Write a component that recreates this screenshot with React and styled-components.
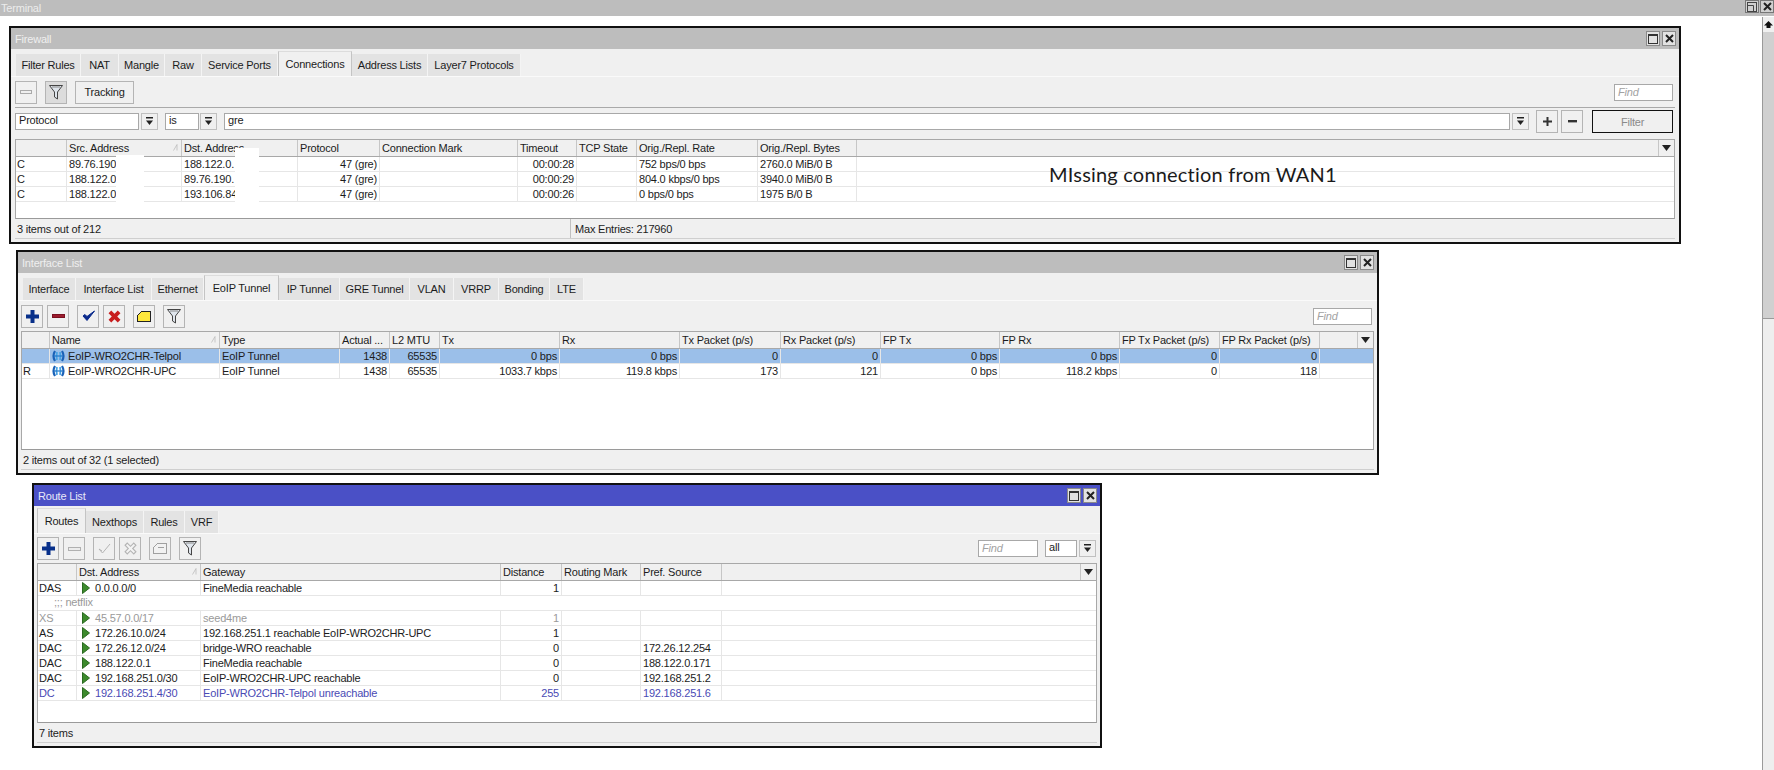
import React from "react";
import styled, { createGlobalStyle } from "styled-components";

const GlobalStyle = createGlobalStyle`
	html, body {
		margin: 0;
		padding: 0;
		background: #fff;
		overflow: hidden;
	}
	body {
		font-family: "Liberation Sans", Arial, sans-serif;
		font-size: 11px;
		letter-spacing: -0.2px;
		color: #1c1c1c;
	}
`;

const Desktop = styled.div`
	position: relative;
	width: 1774px;
	height: 770px;
	overflow: hidden;
	background: #fff;
`;

const TopBar = styled.div`
	display: flex;
	align-items: center;
	justify-content: space-between;
	height: 16px;
	padding-left: 1px;
	background: #bdbdbd;
	color: #ececec;
`;

const TopButtons = styled.div`
	display: flex;
	gap: 1px;
	align-self: flex-start;
`;

const TopButton = styled.div`
	display: flex;
	align-items: center;
	justify-content: center;
	width: 14px;
	height: 13px;
	box-sizing: border-box;
	border: 1px solid #777;
	background: #d0d0d0;
`;

const ScrollBar = styled.div`
	position: absolute;
	top: 17px;
	right: 0;
	bottom: 0;
	width: 12px;
	display: flex;
	flex-direction: column;
	box-sizing: border-box;
	border-left: 1px solid #9a9a9a;
	background: #eee;
`;

const ScrollArrow = styled.div`
	display: flex;
	align-items: center;
	justify-content: center;
	height: 15px;
	background: #f0f0f0;
`;

const ScrollThumb = styled.div`
	height: 287px;
	box-sizing: border-box;
	background: #d0d0d0;
	border-bottom: 1px solid #9a9a9a;
`;

const Window = styled.section`
	position: absolute;
	left: ${(p) => p.$x}px;
	top: ${(p) => p.$y}px;
	width: ${(p) => p.$w}px;
	height: ${(p) => p.$h}px;
	box-sizing: border-box;
	display: flex;
	flex-direction: column;
	border: 2px solid #111;
	background: #f0f0f0;
`;

const TitleBar = styled.header`
	flex: none;
	display: flex;
	align-items: center;
	justify-content: space-between;
	height: ${(p) => p.$h}px;
	padding: 0 3px 0 4px;
	background: ${(p) => (p.$active ? "#4a50c6" : "#bdbdbd")};
	color: ${(p) => (p.$active ? "#e8e8f8" : "#efefef")};
`;

const TitleButtons = styled.div`
	display: flex;
	gap: 2px;
`;

const TitleButton = styled.div`
	display: flex;
	align-items: center;
	justify-content: center;
	width: 14px;
	height: 15px;
	box-sizing: border-box;
	border: 1px solid #8a8a8a;
	background: #e2e2e2;
`;

const TabBar = styled.nav`
	flex: none;
	display: flex;
	align-items: flex-end;
	height: ${(p) => p.$h}px;
	padding-left: ${(p) => p.$left}px;
`;

const Tab = styled.div`
	width: ${(p) => p.$w}px;
	height: ${(p) => (p.$active ? 25 : 22)}px;
	box-sizing: border-box;
	display: flex;
	align-items: center;
	justify-content: center;
	background: ${(p) => (p.$active ? "#f0f0f0" : "#e3e3e3")};
	border-right: 1px solid ${(p) => (p.$active ? "#c4c4c4" : "#f4f4f4")};
	border-left: ${(p) => (p.$active ? "1px solid #c4c4c4" : "0")};
	border-top: ${(p) => (p.$active ? "1px solid #dcdcdc" : "0")};
`;

const Panel = styled.div`
	flex: 1;
	min-height: 0;
	display: flex;
	flex-direction: column;
	padding: 0 ${(p) => p.$side}px 0 ${(p) => p.$side}px;
	border-top: 1px solid #fafafa;
`;

const Toolbar = styled.div`
	flex: none;
	display: flex;
	align-items: center;
	gap: 8px;
	height: ${(p) => p.$h}px;
	padding-right: ${(p) => p.$right || 0}px;
	box-sizing: border-box;
`;

const ToolGroup = styled.div`
	display: flex;
	gap: 4px;
`;

const ToolButton = styled.button`
	display: flex;
	align-items: center;
	justify-content: center;
	width: 22px;
	height: 23px;
	padding: 0;
	box-sizing: border-box;
	border: 1px solid #b4b4b4;
	background: ${(p) => (p.$pressed ? "#dcdcdc" : "#f0f0f0")};
`;

const TextButton = styled.button`
	width: ${(p) => p.$w}px;
	height: 23px;
	padding: 0;
	box-sizing: border-box;
	font: inherit;
	letter-spacing: inherit;
	color: inherit;
	border: 1px solid #b4b4b4;
	background: #f0f0f0;
`;

const FindBox = styled.div`
	width: ${(p) => p.$w}px;
	height: 17px;
	box-sizing: border-box;
	padding: 1px 3px;
	font-style: italic;
	color: #a2a2a2;
	background: #fff;
	border: 1px solid #a8a8a8;
`;

const ToolSpacer = styled.div`
	flex: 1;
`;

const CompactRow = styled.div`
	display: flex;
	align-items: center;
	gap: 2px;
`;

const FilterRow = styled.div`
	flex: none;
	display: flex;
	align-items: center;
	height: 32px;
	box-sizing: border-box;
	padding: 0 2px 4px 0;
	border-top: 1px solid #a9a9a9;
`;

const FilterField = styled.div`
	flex: ${(p) => (p.$w ? "none" : 1)};
	width: ${(p) => p.$w || 0}px;
	height: 17px;
	box-sizing: border-box;
	padding: 0 3px;
	margin-left: ${(p) => p.$gap || 0}px;
	background: #fff;
	border: 1px solid #a8a8a8;
`;

const ArrowButton = styled.div`
	flex: none;
	display: flex;
	align-items: center;
	justify-content: center;
	width: 17px;
	height: 17px;
	margin-left: ${(p) => p.$gap || 0}px;
	box-sizing: border-box;
	border: 1px solid #c0c0c0;
	background: #f0f0f0;
`;

const SquareButton = styled.div`
	flex: none;
	display: flex;
	align-items: center;
	justify-content: center;
	width: 22px;
	height: 23px;
	margin-left: ${(p) => p.$gap}px;
	box-sizing: border-box;
	border: 1px solid #b4b4b4;
`;

const DefaultButton = styled.div`
	flex: none;
	display: flex;
	align-items: center;
	justify-content: center;
	width: 81px;
	height: 23px;
	margin-left: 9px;
	box-sizing: border-box;
	border: 1px solid #111;
	color: #8a8a8a;
`;

const Table = styled.div`
	position: relative;
	flex: 1;
	min-height: 0;
	display: flex;
	flex-direction: column;
	box-sizing: border-box;
	background: #fff;
	border: 1px solid #a8a8a8;
	border-bottom: 1px solid #9a9a9a;
`;

const HeaderRow = styled.div`
	flex: none;
	display: flex;
	height: 17px;
	box-sizing: border-box;
	background: #f0f0f0;
	border-bottom: 1px solid #a8a8a8;
`;

const HeaderCell = styled.div`
	flex: none;
	display: flex;
	align-items: center;
	justify-content: space-between;
	width: ${(p) => p.$w}px;
	box-sizing: border-box;
	padding: 0 3px 1px 2px;
	white-space: nowrap;
	overflow: hidden;
	border-right: 1px solid #c6c6c6;
`;

const HeaderFiller = styled.div`
	flex: 1;
	display: flex;
	justify-content: flex-end;
	align-items: center;
`;

const MenuArrow = styled.div`
	display: flex;
	align-items: center;
	justify-content: center;
	width: 15px;
	height: 100%;
	border-left: 1px solid #c6c6c6;
`;

const Row = styled.div`
	flex: none;
	display: flex;
	height: 15px;
	box-sizing: border-box;
	color: ${(p) => p.$color || "inherit"};
	background: ${(p) => (p.$selected ? "#9bbfe9" : "#fff")};
	border-bottom: 1px solid #e6e6e6;
`;

const Cell = styled.div`
	flex: none;
	display: flex;
	align-items: center;
	justify-content: ${(p) => (p.$right ? "flex-end" : "flex-start")};
	gap: 5px;
	width: ${(p) => p.$w}px;
	box-sizing: border-box;
	padding: 0 2px 1px 2px;
	white-space: nowrap;
	overflow: hidden;
	border-right: 1px solid #e6e6e6;
	&:first-child {
		padding-left: 1px;
	}
`;

const CommentRow = styled.div`
	flex: none;
	height: 15px;
	box-sizing: border-box;
	padding-left: 16px;
	line-height: 13px;
	color: #9a9a9a;
	border-bottom: 1px solid #e6e6e6;
`;

const StatusBar = styled.footer`
	flex: none;
	display: flex;
	align-items: center;
	height: 20px;
	box-sizing: border-box;
	padding-left: 2px;
	border-bottom: 1px solid #cfcfcf;
`;

const StatusPart = styled.div`
	width: ${(p) => p.$w || 0}px;
	flex: ${(p) => (p.$w ? "none" : 1)};
	box-sizing: border-box;
	height: 100%;
	display: flex;
	align-items: center;
	padding-left: ${(p) => p.$pad || 0}px;
	border-left: ${(p) => (p.$divider ? "1px solid #c0c0c0" : "0")};
`;

const BottomGap = styled.div`
	flex: none;
	height: ${(p) => p.$h}px;
`;

const Whiteout = styled.div`
	position: absolute;
	left: ${(p) => p.$x}px;
	top: ${(p) => p.$y}px;
	width: ${(p) => p.$w}px;
	height: ${(p) => p.$h}px;
	background: #fff;
`;

const Annotation = styled.div`
	position: absolute;
	left: 1049px;
	top: 163px;
	font-family: Lato, "Open Sans", sans-serif;
	font-size: 20px;
	line-height: 22px;
	letter-spacing: 0.2px;
	color: #1a1a1a;
	white-space: nowrap;
`;

const RowIcon = styled.svg`
	flex: none;
	margin: 0 ${(p) => p.$right || 0}px 0 ${(p) => p.$left || 0}px;
`;

// icons

const DownMark = () => (
	<svg width="9" height="9" viewBox="0 0 9 9">
		<rect x="1" y="0" width="7" height="1.5" fill="#222" />
		<path d="M1 3.5h7L4.5 8z" fill="#222" />
	</svg>
);

const MenuMark = () => (
	<svg width="9" height="6" viewBox="0 0 9 6">
		<path d="M0 0h9L4.5 6z" fill="#222" />
	</svg>
);

const SortMark = () => (
	<svg width="5" height="7" viewBox="0 0 5 7">
		<path d="M0.5 6.5L4 0.5v6" fill="none" stroke="#bbb" strokeWidth="0.8" />
	</svg>
);

const MaxMark = () => (
	<svg width="10" height="10" viewBox="0 0 10 10">
		<rect x="0.5" y="0.5" width="9" height="9" fill="none" stroke="#333" />
		<rect x="0" y="0" width="10" height="2" fill="#333" />
	</svg>
);

const CloseMark = () => (
	<svg width="9" height="9" viewBox="0 0 9 9">
		<path d="M1 1l7 7M8 1L1 8" stroke="#222" strokeWidth="2" />
	</svg>
);

const RestoreMark = () => (
	<svg width="10" height="10" viewBox="0 0 10 10">
		<rect x="0.5" y="0.5" width="9" height="9" fill="none" stroke="#444" />
		<path d="M0.5 3.5h6v6" fill="none" stroke="#444" />
	</svg>
);

const UpMark = () => (
	<svg width="9" height="7" viewBox="0 0 9 7">
		<path d="M4.5 0L9 4.5H6.5V7h-4V4.5H0z" fill="#111" />
	</svg>
);

const PlusIcon = () => (
	<svg width="13" height="13" viewBox="0 0 13 13">
		<path d="M4.5 0h4v4.5H13v4H8.5V13h-4V8.5H0v-4h4.5z" fill="#08308a" />
	</svg>
);

const SmallPlus = () => (
	<svg width="9" height="9" viewBox="0 0 9 9">
		<path d="M3.5 0h2v3.5H9v2H5.5V9h-2V5.5H0v-2h3.5z" fill="#333" />
	</svg>
);

const SmallMinus = () => (
	<svg width="9" height="3" viewBox="0 0 9 3">
		<rect width="9" height="2.4" fill="#333" />
	</svg>
);

const MinusIcon = ({ off }) => (
	<svg width="13" height="4" viewBox="0 0 13 4">
		<rect
			x="0.5"
			y="0.5"
			width="12"
			height="3"
			fill={off ? "#ececec" : "#9c1c2e"}
			stroke={off ? "#b0b0b0" : "#7a1020"}
		/>
	</svg>
);

const CheckIcon = ({ off }) => (
	<svg width="13" height="12" viewBox="0 0 13 12">
		{off ? (
			<path d="M1 6l3.5 4L12 1M1 6l3 2" fill="none" stroke="#b4b4b4" strokeWidth="1" />
		) : (
			<path d="M1 6l4 4.5L12.5 1 5 6.5 3 4.5z" fill="#0a2a8c" stroke="#0a2a8c" />
		)}
	</svg>
);

const CrossIcon = ({ off }) => (
	<svg width="13" height="13" viewBox="0 0 12 12">
		{off ? (
			<path d="M1 3l2-2 3 3 3-3 2 2-3 3 3 3-2 2-3-3-3 3-2-2 3-3z" fill="#f4f4f4" stroke="#b4b4b4" />
		) : (
			<path d="M0.5 3L3 0.5l3 3 3-3L11.5 3l-3 3 3 3L9 11.5l-3-3-3 3L0.5 9l3-3z" fill="#c81e1e" />
		)}
	</svg>
);

const NoteIcon = ({ off }) => (
	<svg width="14" height="11" viewBox="0 0 14 11" shapeRendering="crispEdges">
		<path
			d="M0.5 4.5L4.5 0.5h9v10h-13z"
			fill={off ? "#f2f2f2" : "#ffe83c"}
			stroke={off ? "#a0a0a0" : "#222"}
		/>
		{off && <path d="M5 4h6" stroke="#a0a0a0" />}
	</svg>
);

const FunnelIcon = () => (
	<svg width="14" height="15" viewBox="0 0 14 15">
		<path d="M0.5 0.5h13L8.5 7v7L5.5 12V7z" fill="#dfe5ec" stroke="#444" />
		<path d="M3 2h8" stroke="#8a8a8a" />
	</svg>
);

const BarIcon = () => (
	<svg width="12" height="4" viewBox="0 0 12 4">
		<rect x="0.5" y="0.5" width="11" height="3" fill="#efefef" stroke="#aaa" />
	</svg>
);

const TunnelIcon = () => (
	<RowIcon width="13" height="12" viewBox="0 0 13 12" $right={-2}>
		<path d="M3 1Q0 6 3 11M10 1Q13 6 10 11" fill="none" stroke="#1a62b8" strokeWidth="2.2" />
		<path d="M5 2Q4 6 5 10M8 2Q9 6 8 10" fill="none" stroke="#48a4e4" strokeWidth="1.8" />
		<path d="M2 6h9" stroke="#1f78cc" strokeWidth="1.2" />
	</RowIcon>
);

const RouteMark = () => (
	<RowIcon width="8" height="12" viewBox="0 0 8 12" $left={3}>
		<path d="M0.5 0.5L7.5 6 0.5 11.5z" fill="#3c8a2c" stroke="#2a6a20" />
	</RowIcon>
);

// data

const firewallTabs = [
	["Filter Rules", 65],
	["NAT", 38],
	["Mangle", 46],
	["Raw", 37],
	["Service Ports", 76],
	["Connections", 74, true],
	["Address Lists", 76],
	["Layer7 Protocols", 93],
];

const firewallCols = [
	{ label: "", w: 51 },
	{ label: "Src. Address", w: 115, sort: true },
	{ label: "Dst. Address", w: 116 },
	{ label: "Protocol", w: 82, right: true },
	{ label: "Connection Mark", w: 138 },
	{ label: "Timeout", w: 59, right: true },
	{ label: "TCP State", w: 60 },
	{ label: "Orig./Repl. Rate", w: 121 },
	{ label: "Orig./Repl. Bytes", w: 99 },
];

const firewallRows = [
	{ cells: ["C", "89.76.190", "188.122.0.", "47 (gre)", "", "00:00:28", "", "752 bps/0 bps", "2760.0 MiB/0 B"] },
	{ cells: ["C", "188.122.0", "89.76.190.", "47 (gre)", "", "00:00:29", "", "804.0 kbps/0 bps", "3940.0 MiB/0 B"] },
	{ cells: ["C", "188.122.0", "193.106.84", "47 (gre)", "", "00:00:26", "", "0 bps/0 bps", "1975 B/0 B"] },
];

const interfaceTabs = [
	["Interface", 53],
	["Interface List", 76],
	["Ethernet", 52],
	["EoIP Tunnel", 75, true],
	["IP Tunnel", 61],
	["GRE Tunnel", 70],
	["VLAN", 44],
	["VRRP", 45],
	["Bonding", 51],
	["LTE", 34],
];

const interfaceCols = [
	{ label: "", w: 28 },
	{ label: "Name", w: 170, sort: true, icon: "tunnel" },
	{ label: "Type", w: 120 },
	{ label: "Actual ...", w: 50, right: true },
	{ label: "L2 MTU", w: 50, right: true },
	{ label: "Tx", w: 120, right: true },
	{ label: "Rx", w: 120, right: true },
	{ label: "Tx Packet (p/s)", w: 101, right: true },
	{ label: "Rx Packet (p/s)", w: 100, right: true },
	{ label: "FP Tx", w: 119, right: true },
	{ label: "FP Rx", w: 120, right: true },
	{ label: "FP Tx Packet (p/s)", w: 100, right: true },
	{ label: "FP Rx Packet (p/s)", w: 100, right: true },
];

const interfaceRows = [
	{
		selected: true,
		cells: ["", "EoIP-WRO2CHR-Telpol", "EoIP Tunnel", "1438", "65535", "0 bps", "0 bps", "0", "0", "0 bps", "0 bps", "0", "0"],
	},
	{
		cells: ["R", "EoIP-WRO2CHR-UPC", "EoIP Tunnel", "1438", "65535", "1033.7 kbps", "119.8 kbps", "173", "121", "0 bps", "118.2 kbps", "0", "118"],
	},
];

const routeTabs = [
	["Routes", 49, true],
	["Nexthops", 58],
	["Rules", 41],
	["VRF", 34],
];

const routeCols = [
	{ label: "", w: 39 },
	{ label: "Dst. Address", w: 124, sort: true, icon: "route" },
	{ label: "Gateway", w: 300 },
	{ label: "Distance", w: 61, right: true },
	{ label: "Routing Mark", w: 79 },
	{ label: "Pref. Source", w: 81 },
];

const BLUE = "#4a4ab4";
const GRAY = "#9a9a9a";

const routeRows = [
	{ cells: ["DAS", "0.0.0.0/0", "FineMedia reachable", "1", "", ""] },
	{ comment: ";;; netflix" },
	{ color: GRAY, cells: ["XS", "45.57.0.0/17", "seed4me", "1", "", ""] },
	{ cells: ["AS", "172.26.10.0/24", "192.168.251.1 reachable EoIP-WRO2CHR-UPC", "1", "", ""] },
	{ cells: ["DAC", "172.26.12.0/24", "bridge-WRO reachable", "0", "", "172.26.12.254"] },
	{ cells: ["DAC", "188.122.0.1", "FineMedia reachable", "0", "", "188.122.0.171"] },
	{ cells: ["DAC", "192.168.251.0/30", "EoIP-WRO2CHR-UPC reachable", "0", "", "192.168.251.2"] },
	{ color: BLUE, cells: ["DC", "192.168.251.4/30", "EoIP-WRO2CHR-Telpol unreachable", "255", "", "192.168.251.6"] },
];

const ListTable = ({ cols, rows, children }) => (
	<Table>
		<HeaderRow>
			{cols.map((col, i) => (
				<HeaderCell key={i} $w={col.w}>
					{col.label}
					{col.sort && <SortMark />}
				</HeaderCell>
			))}
			<HeaderFiller>
				<MenuArrow>
					<MenuMark />
				</MenuArrow>
			</HeaderFiller>
		</HeaderRow>
		{rows.map((row, r) =>
			row.comment ? (
				<CommentRow key={r}>{row.comment}</CommentRow>
			) : (
				<Row key={r} $selected={row.selected} $color={row.color}>
					{row.cells.map((text, c) => (
						<Cell key={c} $w={cols[c].w} $right={cols[c].right}>
							{cols[c].icon === "tunnel" && <TunnelIcon />}
							{cols[c].icon === "route" && <RouteMark />}
							{text}
						</Cell>
					))}
				</Row>
			)
		)}
		{children}
	</Table>
);

const WindowHead = ({ title, active }) => (
	<TitleBar $h={21} $active={active}>
		{title}
		<TitleButtons>
			<TitleButton>
				<MaxMark />
			</TitleButton>
			<TitleButton>
				<CloseMark />
			</TitleButton>
		</TitleButtons>
	</TitleBar>
);

const Tabs = ({ items, left }) => (
	<TabBar $h={27} $left={left}>
		{items.map(([label, w, active]) => (
			<Tab key={label} $w={w} $active={active}>
				{label}
			</Tab>
		))}
	</TabBar>
);

function App() {
	return (
		<Desktop>
			<GlobalStyle />
			<TopBar>
				Terminal
				<TopButtons>
					<TopButton>
						<RestoreMark />
					</TopButton>
					<TopButton>
						<CloseMark />
					</TopButton>
				</TopButtons>
			</TopBar>
			<ScrollBar>
				<ScrollArrow>
					<UpMark />
				</ScrollArrow>
				<ScrollThumb />
			</ScrollBar>

			<Window $x={9} $y={26} $w={1672} $h={218}>
				<WindowHead title="Firewall" />
				<Tabs items={firewallTabs} left={5} />
				<Panel $side={4}>
					<Toolbar $h={30} $right={2}>
						<ToolButton>
							<BarIcon />
						</ToolButton>
						<ToolButton $pressed>
							<FunnelIcon />
						</ToolButton>
						<TextButton $w={59}>Tracking</TextButton>
						<ToolSpacer />
						<FindBox $w={59}>Find</FindBox>
					</Toolbar>
					<FilterRow>
						<FilterField $w={124}>Protocol</FilterField>
						<ArrowButton $gap={2}>
							<DownMark />
						</ArrowButton>
						<FilterField $w={34} $gap={7}>is</FilterField>
						<ArrowButton $gap={1}>
							<DownMark />
						</ArrowButton>
						<FilterField $gap={7}>gre</FilterField>
						<ArrowButton $gap={2}>
							<DownMark />
						</ArrowButton>
						<SquareButton $gap={7}>
							<SmallPlus />
						</SquareButton>
						<SquareButton $gap={3}>
							<SmallMinus />
						</SquareButton>
						<DefaultButton>Filter</DefaultButton>
					</FilterRow>
					<ListTable cols={firewallCols} rows={firewallRows}>
						<Whiteout $x={100} $y={15} $w={28} $h={47} />
						<Whiteout $x={219} $y={8} $w={24} $h={54} />
					</ListTable>
					<StatusBar>
						<StatusPart $w={553}>3 items out of 212</StatusPart>
						<StatusPart $divider $pad={4}>Max Entries: 217960</StatusPart>
					</StatusBar>
					<BottomGap $h={3} />
				</Panel>
			</Window>
			<Annotation>MIssing connection from WAN1</Annotation>

			<Window $x={16} $y={250} $w={1363} $h={225}>
				<WindowHead title="Interface List" />
				<Tabs items={interfaceTabs} left={5} />
				<Panel $side={3}>
					<Toolbar $h={30} $right={2}>
						<ToolGroup>
							<ToolButton>
								<PlusIcon />
							</ToolButton>
							<ToolButton>
								<MinusIcon />
							</ToolButton>
						</ToolGroup>
						<ToolGroup>
							<ToolButton>
								<CheckIcon />
							</ToolButton>
							<ToolButton>
								<CrossIcon />
							</ToolButton>
						</ToolGroup>
						<ToolButton>
							<NoteIcon />
						</ToolButton>
						<ToolButton>
							<FunnelIcon />
						</ToolButton>
						<ToolSpacer />
						<FindBox $w={59}>Find</FindBox>
					</Toolbar>
					<ListTable cols={interfaceCols} rows={interfaceRows} />
					<StatusBar>2 items out of 32 (1 selected)</StatusBar>
					<BottomGap $h={3} />
				</Panel>
			</Window>

			<Window $x={32} $y={483} $w={1070} $h={265}>
				<WindowHead title="Route List" active />
				<Tabs items={routeTabs} left={3} />
				<Panel $side={3}>
					<Toolbar $h={29} $right={1}>
						<ToolGroup>
							<ToolButton>
								<PlusIcon />
							</ToolButton>
							<ToolButton>
								<MinusIcon off />
							</ToolButton>
						</ToolGroup>
						<ToolGroup>
							<ToolButton>
								<CheckIcon off />
							</ToolButton>
							<ToolButton>
								<CrossIcon off />
							</ToolButton>
						</ToolGroup>
						<ToolButton>
							<NoteIcon off />
						</ToolButton>
						<ToolButton>
							<FunnelIcon />
						</ToolButton>
						<ToolSpacer />
						<CompactRow>
							<FindBox $w={60}>Find</FindBox>
							<FilterField $w={32} $gap={5}>all</FilterField>
							<ArrowButton>
								<DownMark />
							</ArrowButton>
						</CompactRow>
					</Toolbar>
					<ListTable cols={routeCols} rows={routeRows} />
					<StatusBar>7 items</StatusBar>
					<BottomGap $h={3} />
				</Panel>
			</Window>
		</Desktop>
	);
}

export default App;
